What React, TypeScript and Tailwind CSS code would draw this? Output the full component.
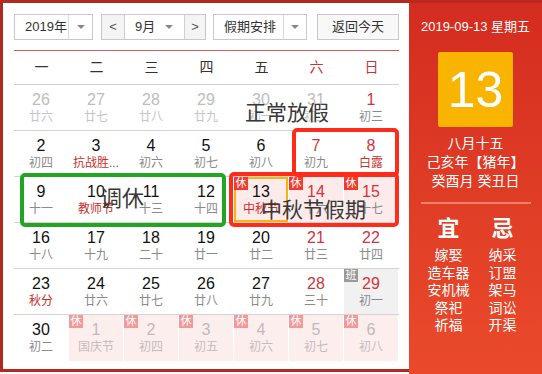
import React from "react";

type CellT = {
  n: string;
  l: string;
  nc?: "black" | "red" | "prev" | "fade";
  lc?: "gray" | "red" | "prev" | "fade";
  bg?: "pink" | "gray" | "pinkfade";
  badge?: "休" | "班";
  bt?: "red" | "fade" | "gray";
  today?: boolean;
};

const rows: CellT[][] = [
  [
    { n: "26", l: "廿六", nc: "prev", lc: "prev" },
    { n: "27", l: "廿七", nc: "prev", lc: "prev" },
    { n: "28", l: "廿八", nc: "prev", lc: "prev" },
    { n: "29", l: "廿九", nc: "prev", lc: "prev" },
    { n: "30", l: "初一", nc: "prev", lc: "prev" },
    { n: "31", l: "初二", nc: "prev", lc: "prev" },
    { n: "1", l: "初三", nc: "red" },
  ],
  [
    { n: "2", l: "初四" },
    { n: "3", l: "抗战胜...", lc: "red" },
    { n: "4", l: "初六" },
    { n: "5", l: "初七" },
    { n: "6", l: "初八" },
    { n: "7", l: "初九", nc: "red" },
    { n: "8", l: "白露", nc: "red", lc: "red" },
  ],
  [
    { n: "9", l: "十一" },
    { n: "10", l: "教师节", lc: "red" },
    { n: "11", l: "十三" },
    { n: "12", l: "十四" },
    { n: "13", l: "中秋节", lc: "red", bg: "pink", badge: "休", bt: "red", today: true },
    { n: "14", l: "十六", nc: "red", bg: "pink", badge: "休", bt: "red" },
    { n: "15", l: "十七", nc: "red", bg: "pink", badge: "休", bt: "red" },
  ],
  [
    { n: "16", l: "十八" },
    { n: "17", l: "十九" },
    { n: "18", l: "二十" },
    { n: "19", l: "廿一" },
    { n: "20", l: "廿二" },
    { n: "21", l: "廿三", nc: "red" },
    { n: "22", l: "廿四", nc: "red" },
  ],
  [
    { n: "23", l: "秋分", lc: "red" },
    { n: "24", l: "廿六" },
    { n: "25", l: "廿七" },
    { n: "26", l: "廿八" },
    { n: "27", l: "廿九" },
    { n: "28", l: "三十", nc: "red" },
    { n: "29", l: "初一", nc: "red", bg: "gray", badge: "班", bt: "gray" },
  ],
  [
    { n: "30", l: "初二" },
    { n: "1", l: "国庆节", nc: "fade", lc: "fade", bg: "pinkfade", badge: "休", bt: "fade" },
    { n: "2", l: "初四", nc: "fade", lc: "fade", bg: "pinkfade", badge: "休", bt: "fade" },
    { n: "3", l: "初五", nc: "fade", lc: "fade", bg: "pinkfade", badge: "休", bt: "fade" },
    { n: "4", l: "初六", nc: "fade", lc: "fade", bg: "pinkfade", badge: "休", bt: "fade" },
    { n: "5", l: "初七", nc: "fade", lc: "fade", bg: "pinkfade", badge: "休", bt: "fade" },
    { n: "6", l: "初八", nc: "fade", lc: "fade", bg: "pinkfade", badge: "休", bt: "fade" },
  ],
];

const numColor = {
  black: "text-[#111]",
  red: "text-[#d3343c]",
  prev: "text-[#bdbdbd]",
  fade: "text-[#c2b8b8]",
};
const lunColor = {
  gray: "text-[#8a8a8a]",
  red: "text-[#c9302c]",
  prev: "text-[#c6c6c6]",
  fade: "text-[#c4bcbc]",
};
const bgColor = {
  pink: "bg-[#fdeaea]",
  gray: "bg-[#f1f1f1]",
  pinkfade: "bg-[#fdeeee]",
};
const badgeColor = {
  red: "bg-[#f43a2c]",
  fade: "bg-[#f29a9a]",
  gray: "bg-[#9a9a9a]",
};

function Cell({ c }: { c: CellT }) {
  const inner =
    "h-full flex flex-col items-center " +
    (c.bg ? bgColor[c.bg] + " " : "") +
    (c.today ? "border-2 border-[#f6b40f] pt-[4px]" : "pt-[6px]");
  return (
    <div className="relative h-full pr-[1px]">
      <div className={inner}>
        <div className={"text-[16px] leading-[18px] " + numColor[c.nc ?? "black"]}>{c.n}</div>
        <div className={"text-[12px] leading-[16px] whitespace-nowrap " + lunColor[c.lc ?? "gray"]}>{c.l}</div>
      </div>
      {c.badge && (
        <div
          className={
            "absolute left-0 top-0 w-[14px] h-[13px] text-white text-[11px] leading-[13px] text-center " +
            badgeColor[c.bt ?? "red"]
          }
        >
          {c.badge}
        </div>
      )}
    </div>
  );
}

function Arrow() {
  return (
    <div className="w-0 h-0 border-l-[4px] border-r-[4px] border-t-[4px] border-l-transparent border-r-transparent border-t-[#8a8a8a]" />
  );
}

export default function App() {
  const weekdays = ["一", "二", "三", "四", "五", "六", "日"];
  const yi = ["嫁娶", "造车器", "安机械", "祭祀", "祈福"];
  const ji = ["纳采", "订盟", "架马", "词讼", "开渠"];
  return (
    <div
      className="w-[542px] h-[374px] bg-white flex overflow-hidden"
      style={{ fontFamily: '"Liberation Sans", "Noto Sans CJK SC", sans-serif' }}
    >
      {/* Left calendar */}
      <div className="relative w-[409px] h-[372px] border-l-[3px] border-t-[3px] border-b-[3px] border-[#b3281f] pl-[11px] pr-[10px] pt-[11px]">
        {/* controls */}
        <div className="flex h-[26px] text-[13px] text-[#333]">
          <div className="flex w-[79px] border border-[#c8c8c8] bg-white">
            <div className="w-[54px] pl-[10px] leading-[24px] border-r border-[#d8d8d8]">2019年</div>
            <div className="flex-1 flex items-center justify-center">
              <Arrow />
            </div>
          </div>
          <div className="flex w-[105px] ml-[8px] border border-[#c8c8c8] bg-white">
            <div className="w-[23px] bg-[#f4f4f4] border-r border-[#d0d0d0] flex items-center justify-center text-[#555] leading-[24px]">
              &lt;
            </div>
            <div className="w-[60px] flex items-center border-r border-[#d0d0d0]">
              <div className="pl-[10px] w-[40px] leading-[24px]">9月</div>
              <Arrow />
            </div>
            <div className="flex-1 bg-[#f4f4f4] flex items-center justify-center text-[#555] leading-[24px]">&gt;</div>
          </div>
          <div className="flex w-[94px] ml-[7px] border border-[#c8c8c8] bg-white">
            <div className="w-[70px] pl-[10px] leading-[24px] border-r border-[#d8d8d8]">假期安排</div>
            <div className="flex-1 flex items-center justify-center">
              <Arrow />
            </div>
          </div>
          <div className="w-[82px] ml-[10px] border border-[#c8c8c8] bg-[#f8f8f8] flex items-center justify-center leading-[24px]">
            返回今天
          </div>
        </div>
        <div className="mt-[10px] h-px bg-[#d65c5c]" />
        {/* weekday header */}
        <div className="grid grid-cols-7 h-[34px] border-b border-[#d0d0d0] text-[14px] items-center">
          {weekdays.map((w, i) => (
            <div key={w} className={"text-center " + (i >= 5 ? "text-[#c8343a]" : "text-[#333]")}>
              {w}
            </div>
          ))}
        </div>
        {/* rows */}
        {rows.map((r, ri) => (
          <div
            key={ri}
            className={"grid grid-cols-[repeat(7,55px)] h-[46px] " + (ri < 5 ? "border-b border-[#d4d4d4]" : "")}
          >
            {r.map((c, ci) => (
              <Cell key={ci} c={c} />
            ))}
          </div>
        ))}

        {/* annotation boxes */}
        <div className="absolute left-[17px] top-[170px] w-[206px] h-[54px] border-[4px] border-[#22a522] rounded-[5px]" />
        <div className="absolute left-[289px] top-[125px] w-[107px] h-[49px] border-[4px] border-[#ff2b1b] rounded-[5px]" />
        <div className="absolute left-[226px] top-[169px] w-[170px] h-[55px] border-[4px] border-[#ff2b1b] rounded-[5px]" />
        <div className="absolute left-[242px] top-[99px] text-[21px] leading-[22px] text-[#383838] whitespace-nowrap">
          正常放假
        </div>
        <div className="absolute left-[97px] top-[184px] text-[22px] leading-[23px] text-[#383838] whitespace-nowrap">
          调休
        </div>
        <div className="absolute left-[258px] top-[196px] text-[21px] leading-[22px] text-[#383838] whitespace-nowrap">
          中秋节假期
        </div>
      </div>

      {/* Right panel */}
      <div className="w-[133px] h-[374px] border-t-[3px] border-[#b8281f] bg-gradient-to-b from-[#d42c20] to-[#ea4a2b] flex flex-col items-center text-white">
        <div className="mt-[16px] text-[13px] leading-[16px] whitespace-nowrap">2019-09-13 星期五</div>
        <div className="mt-[17px] w-[75px] h-[75px] rounded-[2px] bg-[#f9b400] flex items-center justify-center text-[50px] leading-none">
          13
        </div>
        <div className="mt-[7px] text-[14px] leading-[19px] text-center whitespace-nowrap">
          <div>八月十五</div>
          <div>己亥年【猪年】</div>
          <div>癸酉月 癸丑日</div>
        </div>
        <div className="mt-[11px] w-[110px] h-[2px] bg-[#f0806a]" />
        <div className="mt-[12px] grid grid-cols-[54px_54px] text-center">
          <div className="text-[22px] leading-[26px] font-bold">宜</div>
          <div className="text-[22px] leading-[26px] font-bold">忌</div>
          <div className="mt-[5px] text-[14px] leading-[17.5px]">
            {yi.map((t) => (
              <div key={t}>{t}</div>
            ))}
          </div>
          <div className="mt-[5px] text-[14px] leading-[17.5px]">
            {ji.map((t) => (
              <div key={t}>{t}</div>
            ))}
          </div>
        </div>
      </div>
    </div>
  );
}
